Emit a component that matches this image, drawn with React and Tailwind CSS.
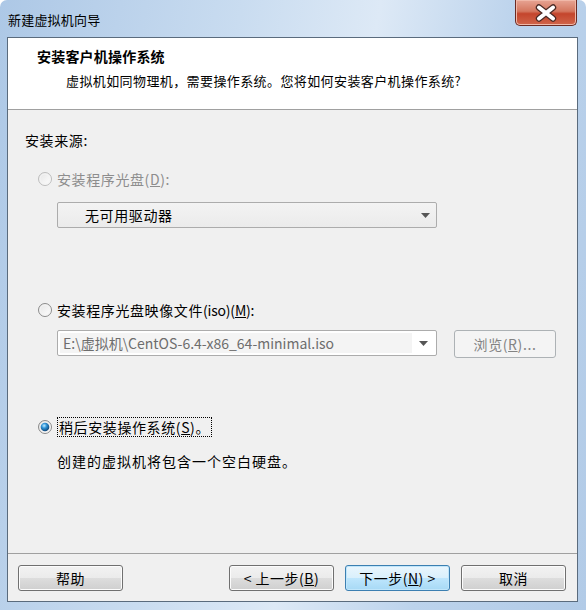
import React from 'react';

const font = "font-['Microsoft_YaHei','Noto_Sans_CJK_SC','Noto_Sans',sans-serif]";

function Radio({ checked, disabled }) {
  return (
    <svg width="14" height="14" viewBox="0 0 14 14" className="shrink-0">
      <defs>
        <linearGradient id={checked ? 'rg-c' : 'rg-u'} x1="0" y1="0" x2="1" y2="1">
          <stop offset="0" stopColor={disabled ? '#e4e4e4' : '#d6d6d6'} />
          <stop offset="1" stopColor="#ffffff" />
        </linearGradient>
        <radialGradient id="dot" cx="0.4" cy="0.35" r="0.7">
          <stop offset="0" stopColor="#c4ecff" />
          <stop offset="0.4" stopColor="#2f94d8" />
          <stop offset="1" stopColor="#0b3a6a" />
        </radialGradient>
      </defs>
      <circle cx="7" cy="7" r="6.5" fill={`url(#${checked ? 'rg-c' : 'rg-u'})`} stroke={disabled ? '#bcbcbc' : '#8a8a8a'} />
      <circle cx="7" cy="7" r="5" fill="none" stroke="#f4f4f4" strokeWidth="1" />
      {checked && <circle cx="7" cy="7" r="4.3" fill="url(#dot)" />}
    </svg>
  );
}

function Arrow({ color = '#4d4d4d' }) {
  return (
    <svg width="9" height="5" viewBox="0 0 9 5">
      <path d="M0 0 H9 L4.5 5 Z" fill={color} />
    </svg>
  );
}

function Btn({ children, primary }) {
  return (
    <div
      className={
        primary
          ? 'w-[105px] h-[26px] rounded-[3px] border border-[#3c7fb1] shadow-[inset_0_0_0_1px_#c0e6fb] bg-[linear-gradient(#eaf6fd_0%,#d9f0fc_50%,#bee6fd_51%,#a7d9f5_100%)] flex items-center justify-center text-[14px] tracking-[0.5px] text-black'
          : 'w-[105px] h-[26px] rounded-[3px] border border-[#707070] shadow-[inset_0_0_0_1px_#fcfcfc] bg-[linear-gradient(#f2f2f2_0%,#ebebeb_50%,#dddddd_51%,#cfcfcf_100%)] flex items-center justify-center text-[14px] tracking-[0.5px] text-black'
      }
    >
      {children}
    </div>
  );
}

export default function App() {
  return (
    <div className={`${font} w-[586px] h-[610px] flex flex-col rounded-t-[7px] bg-[linear-gradient(100deg,#adc8e6_0%,#c9dcf0_35%,#dde9f6_55%,#bcd3ec_75%,#b2cbe7_100%)] pl-[7px] pr-[8px] pb-[8px] overflow-hidden`}>
      {/* 标题栏 */}
      <div className="h-[37px] flex items-start justify-between shrink-0">
        <div className="pt-[10px] pl-[1px] text-[13px] leading-[20px] tracking-[0.2px] text-black">新建虚拟机向导</div>
        <div className="w-[62px] h-[26px] mr-[1px] rounded-b-[5px] border border-t-0 border-[#6b2a22] bg-[linear-gradient(#e7a493_0%,#d4775f_45%,#c4452c_55%,#d0654a_100%)] shadow-[inset_0_0_0_1px_#f0b8a8] flex items-center justify-center">
          <svg width="24" height="18" viewBox="0 0 24 18">
            <path d="M5 3.5 L19 14.5 M19 3.5 L5 14.5" stroke="#4a2a25" strokeWidth="6.4" strokeLinecap="round" />
            <path d="M5 3.5 L19 14.5 M19 3.5 L5 14.5" stroke="#ffffff" strokeWidth="4" strokeLinecap="round" />
          </svg>
        </div>
      </div>

      {/* 内容区 */}
      <div className="flex-1 flex flex-col border border-[#5a6b7d] bg-[#f0f0f0] text-[14px] tracking-[0.6px] text-black">
        {/* 头部 */}
        <div className="h-[72px] bg-white border-b border-[#a0a0a0] shrink-0">
          <div className="pt-[8px] pl-[29px] text-[14px] leading-[20px] tracking-[0.2px] font-bold">安装客户机操作系统</div>
          <div className="mt-[5px] pl-[58px] text-[13px] leading-[20px] tracking-[0.4px]">虚拟机如同物理机，需要操作系统。您将如何安装客户机操作系统?</div>
        </div>

        {/* 主体 */}
        <div className="flex-1 flex flex-col pt-[20px]">
          <div className="pl-[17px] leading-[20px]">安装来源:</div>

          <div className="mt-[19px] pl-[30px] flex items-center gap-[5px] h-[20px] text-[#8d8d8d]">
            <Radio disabled />
            <span>安装程序光盘(<span className="underline">D</span>):</span>
          </div>
          <div className="mt-[13px] ml-[49px] w-[380px] h-[26px] rounded-[2px] border border-[#acacac] bg-[linear-gradient(#f3f3f3,#ebebeb)] flex items-center justify-between pl-[27px] pr-[6px]">
            <span>无可用驱动器</span>
            <Arrow color="#565656" />
          </div>

          <div className="mt-[72px] pl-[30px] flex items-center gap-[5px] h-[20px]">
            <Radio />
            <span>安装程序光盘映像文件<span className="tracking-[-0.2px]">(iso)(<span className="underline">M</span>):</span></span>
          </div>
          <div className="mt-[10px] ml-[49px] flex items-start gap-[17px]">
            <div className="w-[380px] h-[26px] rounded-[2px] border border-[#acacac] bg-white flex items-center p-[2px]">
              <div className="flex-1 h-full bg-[#f4f4f4] pl-[3px] flex items-center text-[#6d6d6d] tracking-[0px]">E:\虚拟机\CentOS-6.4-x86_64-minimal.iso</div>
              <div className="w-[22px] flex justify-center"><Arrow color="#565656" /></div>
            </div>
            <div className="w-[102px] h-[28px] rounded-[3px] border border-[#adb2b5] bg-[#f4f4f4] flex items-center justify-center text-[#838383]">
              浏览(<span className="underline">R</span>)...
            </div>
          </div>

          <div className="mt-[59px] pl-[30px] flex items-center gap-[5px] h-[20px]">
            <Radio checked />
            <span className="border border-dotted border-black px-[1px] leading-[18px]">稍后安装操作系统(<span className="underline">S</span>)。</span>
          </div>
          <div className="mt-[14px] pl-[49px] leading-[20px] tracking-[1px]">创建的虚拟机将包含一个空白硬盘。</div>
        </div>

        {/* 底部按钮 */}
        <div className="border-t border-[#a0a0a0] shrink-0 flex items-center pt-[11px] pb-[10px] pl-[10px] pr-[11px]">
          <Btn>帮助</Btn>
          <div className="flex-1" />
          <div className="flex gap-[11px]">
            <Btn>&lt; 上一步(<span className="underline">B</span>)</Btn>
            <Btn primary>下一步(<span className="underline">N</span>) &gt;</Btn>
            <Btn>取消</Btn>
          </div>
        </div>
      </div>
    </div>
  );
}
